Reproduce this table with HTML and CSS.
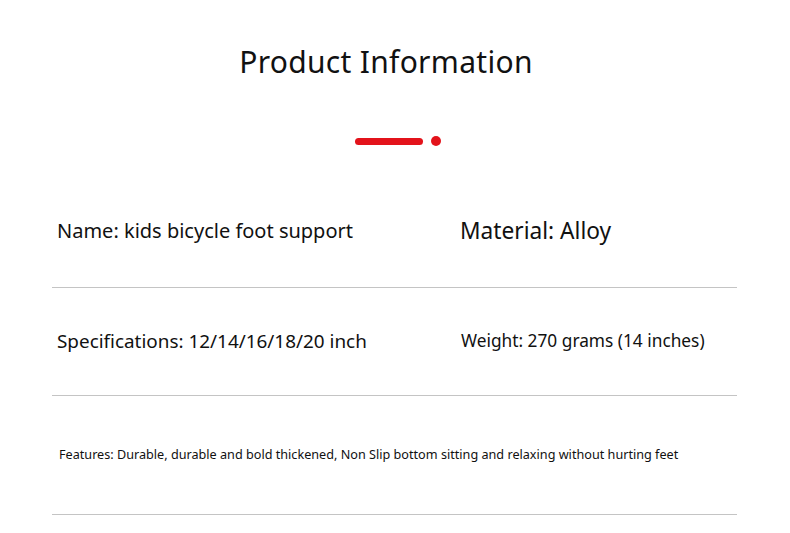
FILE: index.html
```html
<!DOCTYPE html>
<html>
<head>
<meta charset="utf-8">
<link rel="stylesheet" href="styles.css">
</head>
<body>
<div class="page">
  <h1 class="title">Product Information</h1>
  <div class="deco"><span class="bar"></span><span class="dot"></span></div>
  <div class="table">
    <div class="row row1">
      <div class="cell left name">Name: kids bicycle foot support</div>
      <div class="cell right material">Material: Alloy</div>
    </div>
    <div class="row row2">
      <div class="cell left spec">Specifications: 12/14/16/18/20 inch</div>
      <div class="cell right weight">Weight: 270 grams (14 inches)</div>
    </div>
    <div class="row row3">
      <div class="cell left features">Features: Durable, durable and bold thickened, Non Slip bottom sitting and relaxing without hurting feet</div>
    </div>
  </div>
</div>
</body>
</html>
```
FILE: styles.css
```css
html, body {
  margin: 0;
  padding: 0;
  background: #fff;
}
body {
  font-family: "Noto Sans", "Open Sans", sans-serif;
  color: #111;
  width: 790px;
  height: 533px;
  overflow: hidden;
}
.page {
  display: flex;
  flex-direction: column;
  align-items: center;
}
.title {
  margin: 40px 0 0 0;
  font-size: 30px;
  font-weight: 400;
  line-height: 44px;
  letter-spacing: 0.3px;
  color: #111;
  transform: translateX(-9px);
}
.deco {
  margin-top: 52px;
  display: flex;
  align-items: center;
  gap: 8px;
  transform: translateX(3px);
}
.bar {
  display: block;
  width: 68px;
  height: 7px;
  border-radius: 4px;
  background: #e3131b;
}
.dot {
  display: block;
  width: 10px;
  height: 10px;
  border-radius: 50%;
  background: #e3131b;
}
.table {
  margin-top: 51px;
  width: 685px;
  margin-left: -1px;
  display: flex;
  flex-direction: column;
}
.row {
  display: flex;
  border-bottom: 1px solid #c4c4c4;
}
.row1 { height: 90px; }
.row2 { height: 107px; }
.row3 { height: 118px; }
.cell { white-space: nowrap; }
.left { width: 402px; flex: none; }
.name {
  font-size: 20px;
  padding: 20px 0 0 5px;
}
.material {
  font-size: 22.7px;
  padding: 18px 0 0 1px;
}
.spec {
  font-size: 18.9px;
  padding: 40px 0 0 5px;
}
.weight {
  font-size: 17.3px;
  padding: 41px 0 0 2px;
}
.features {
  font-size: 12.65px;
  padding: 49px 0 0 7px;
}
```
